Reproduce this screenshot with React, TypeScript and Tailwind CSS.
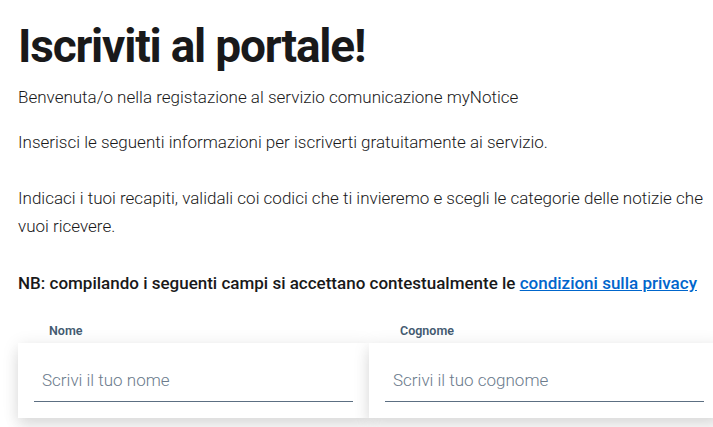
export default function App() {
  return (
    <div className="min-h-screen w-full overflow-hidden bg-white font-['Roboto',sans-serif] text-[#19191a]">
      <div className="w-[760px] pl-[18px]">
        <h1 className="mt-[18px] text-[46px] font-bold leading-[56px] tracking-[-1.2px]">Iscriviti al portale!</h1>
        <p className="mt-[9px] text-[17px] font-light leading-[28px]">
          Benvenuta/o nella registazione al servizio comunicazione myNotice
        </p>
        <p className="mt-[17px] text-[17px] font-light leading-[28px]">
          Inserisci le seguenti informazioni per iscriverti gratuitamente ai servizio.
        </p>
        <p className="mt-[28px] w-[685px] text-[17px] font-light leading-[28px]">
          Indicaci i tuoi recapiti, validali coi codici che ti invieremo e scegli le categorie delle notizie che vuoi ricevere.
        </p>
        <p className="mt-[29px] text-[17px] font-medium leading-[28px]">
          NB: compilando i seguenti campi si accettano contestualmente le{" "}
          <a href="#" className="text-[#0066cc] underline">condizioni sulla privacy</a>
        </p>
        <div className="mt-[30px] grid w-[702px] grid-cols-2">
          {[
            { label: "Nome", ph: "Scrivi il tuo nome" },
            { label: "Cognome", ph: "Scrivi il tuo cognome" },
          ].map((f) => (
            <div key={f.label} className="relative pt-[16px]">
              <label className="absolute left-[31px] top-[-5px] text-[12.5px] font-semibold text-[#435a70]">{f.label}</label>
              <div className="bg-white px-[16px] pb-[16px] pt-[20px] shadow-[0_2px_16px_rgba(0,0,0,0.10),0_10px_14px_rgba(0,0,0,0.08)]">
                <input
                  placeholder={f.ph}
                  className="h-[39px] w-full border-b border-[#5c6f82] px-[8px] pb-[5px] text-[17px] font-light text-[#5c6f82] outline-none placeholder:text-[#6b7b8c]"
                />
              </div>
            </div>
          ))}
        </div>
      </div>
    </div>
  );
}
